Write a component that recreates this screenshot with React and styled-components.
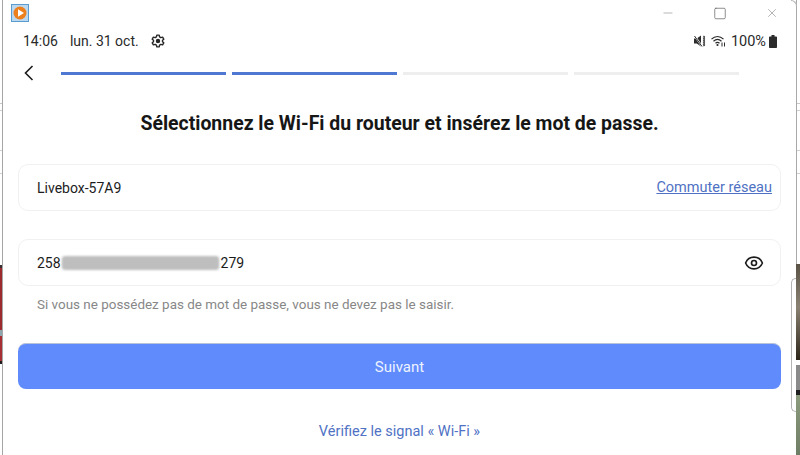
import styled, { createGlobalStyle } from "styled-components"
import { Eye, Minus, Square, X } from "lucide-react"

const GlobalStyle = createGlobalStyle`
  html, body {
    margin: 0;
    padding: 0;
    height: 100%;
    background: #fff;
    overflow: hidden;
  }
  body {
    font-family: Roboto, "Liberation Sans", sans-serif;
  }
`;

const Desktop = styled.div`
  display: flex;
  width: 800px;
  height: 455px;
  overflow: hidden;
`;

const Strip = styled.div`
  display: flex;
  flex-direction: column;
  flex: none;
  width: ${(p) => p.$width}px;
`;

const StripPart = styled.div`
  flex: none;
  height: ${(p) => p.$height}px;
  background: ${(p) => p.$color};
  border-left: ${(p) => (p.$edge ? "1px solid #a9a9a9" : "none")};
`;

const Window = styled.main`
  position: relative;
  flex: 1;
  min-width: 0;
  display: flex;
  flex-direction: column;
  border-left: 1px solid #a6a6a6;
  background: #fff;
`;

const Corner = styled.div`
  position: absolute;
  top: 0;
  right: -1px;
  width: 5px;
  height: 5px;
  border-top: 1px solid #b5b5b5;
  border-right: 1px solid #b5b5b5;
  border-top-right-radius: 6px;
`;

const SidePanel = styled.div`
  position: absolute;
  top: 278px;
  right: 0;
  width: 4px;
  height: 132px;
  border: 1px solid #b4b4b4;
  border-right: none;
  border-radius: 5px 0 0 5px;
  background: #fff;
`;

const TitleBar = styled.header`
  display: flex;
  align-items: center;
  justify-content: space-between;
  height: 26px;
  padding: 0 17px 0 8px;
`;

const WindowControls = styled.div`
  display: flex;
  align-items: center;
  gap: 38px;
`;

const ControlButton = styled.span`
  display: flex;
  align-items: center;
  justify-content: center;
  width: 14px;
  color: ${(p) => p.$color || "#5f5f5f"};
`;

const StatusBar = styled.div`
  display: flex;
  align-items: center;
  justify-content: space-between;
  height: 30px;
  padding: 0 19px 0 20px;
  font-size: 14px;
  color: #2a2a2a;
`;

const StatusGroup = styled.div`
  display: flex;
  align-items: center;
`;

const StatusDate = styled.span`
  margin: 0 12px 0 12px;
`;

const IconGap = styled.span`
  width: 5px;
`;

const Percent = styled.span`
  margin: 0 3px 0 5px;
  font-size: 14.5px;
`;

const NavRow = styled.nav`
  display: flex;
  align-items: center;
  height: 34px;
  padding-left: 21px;
`;

const BackButton = styled.span`
  display: flex;
  width: 37px;
  flex: none;
`;

const Steps = styled.div`
  display: flex;
  gap: 6px;
`;

const Step = styled.div`
  width: 165px;
  height: 3px;
  background: ${(p) => (p.$done ? "#4f78d2" : "#eeeeee")};
`;

const Content = styled.section`
  display: flex;
  flex-direction: column;
  padding: 0 15px;
`;

const Title = styled.h1`
  margin: 22px 0 28px;
  font-size: 19.45px;
  line-height: 24px;
  font-weight: 700;
  text-align: center;
  color: #161616;
`;

const Field = styled.div`
  display: flex;
  align-items: center;
  justify-content: space-between;
  height: 47px;
  box-sizing: border-box;
  padding: 0 8px 0 18px;
  margin-bottom: ${(p) => p.$gap || 0}px;
  border: 1px solid #f1f1f1;
  border-radius: 10px;
  font-size: 14px;
  color: #1c1c1c;
`;

const SwitchLink = styled.a`
  font-size: 14.5px;
  color: #4f72c4;
  text-decoration: underline;
`;

const Secret = styled.span`
  display: flex;
  align-items: center;
`;

const Smudge = styled.span`
  display: block;
  width: 157px;
  height: 14px;
  margin: 0 2px 0 1px;
  border-radius: 3px;
  background: repeating-linear-gradient(90deg, #a4a4a4 0 1px, #d8d8d8 1px 2px);
  filter: blur(0.8px);
`;

const Hint = styled.p`
  margin: 11px 0 30px 19px;
  font-size: 13.45px;
  line-height: 16px;
  color: #878787;
`;

const NextButton = styled.button`
  height: 46px;
  border: none;
  border-top: 1px solid #b9c3d8;
  border-radius: 8px;
  background: #5f8bfd;
  font-family: inherit;
  font-size: 15px;
  color: #eef3ff;
`;

const SignalLink = styled.a`
  margin-top: 33px;
  font-size: 14.5px;
  line-height: 20px;
  text-align: center;
  color: #4f72c4;
`;

const leftParts = [
  { height: 103, color: "#fff" },
  { height: 1, color: "#c8c8c8" },
  { height: 6, color: "#fff" },
  { height: 1, color: "#d0d0d0" },
  { height: 39, color: "#fff" },
  { height: 1, color: "#d0d0d0" },
  { height: 22, color: "#fff" },
  { height: 1, color: "#d0d0d0" },
  { height: 91, color: "#fff" },
  { height: 3, color: "#3a3030" },
  { height: 62, color: "#9c2b2e" },
  { height: 6, color: "#8fa6b0" },
  { height: 25, color: "#a52f32" },
  { height: 3, color: "#1d1d1d" },
  { height: 91, color: "#fff" },
]

const rightParts = [
  { height: 103, color: "#fff", edge: true },
  { height: 1, color: "#c8c8c8", edge: true },
  { height: 6, color: "#fff", edge: true },
  { height: 1, color: "#d0d0d0", edge: true },
  { height: 39, color: "#fff", edge: true },
  { height: 1, color: "#d0d0d0", edge: true },
  { height: 22, color: "#fff", edge: true },
  { height: 1, color: "#d0d0d0", edge: true },
  { height: 90, color: "#fff", edge: true },
  { height: 96, color: "linear-gradient(#5a5346, #8a8172 45%, #2e2619)" },
  { height: 5, color: "#fff" },
  { height: 25, color: "#8a8a8a" },
  { height: 5, color: "#1f1f1f" },
  { height: 60, color: "linear-gradient(#8b9b7c, #6f7d66)" },
]

const AppIcon = () => (
  <svg width="18" height="18" viewBox="0 0 18 18">
    <rect x="0.5" y="0.5" width="17" height="17" fill="#bcd8ef" stroke="#5a9bd0" />
    <circle cx="9" cy="9" r="6.5" fill="#ee7f1d" />
    <path d="M7 5.2 L13 9 L7 12.8 Z" fill="#fff" />
  </svg>
)

const GearIcon = () => (
  <svg width="14" height="14" viewBox="0 0 24 24" fill="none" stroke="#262626" strokeWidth="2.4" strokeLinejoin="round">
    <path d="M10 2h4l.7 3 2.3 1.3 2.9-.9 2 3.4-2.2 2.1v2.2l2.2 2.1-2 3.4-2.9-.9L14.700 19 14 22h-4l-.7-3L7 17.700l-2.900.9-2-3.400 2.200-2.100v-2.200L2.100 8.800l2-3.400 2.900.9L9.300 5z" />
    <circle cx="12" cy="12" r="2.600" fill="#262626" />
  </svg>
)

const MuteIcon = () => (
  <svg width="12" height="12" viewBox="0 0 12 12" fill="none">
    <path d="M0 3.500h2.800L7 .5v11L2.800 8.500H0z" fill="#2b2b2b" />
    <path d="M.5 .5l7.500 11" stroke="#fff" strokeWidth="1.800" />
    <path d="M.5 1l7.500 10.500" stroke="#2b2b2b" strokeWidth="1" />
    <path d="M9.500 1l1 1-1 1 1 1-1 1 1 1-1 1 1 1-1 1 1 1-1 1" stroke="#2b2b2b" strokeWidth="1.100" />
  </svg>
)

const WifiIcon = () => (
  <svg width="15" height="12" viewBox="0 0 15 12" fill="none" stroke="#2b2b2b">
    <path d="M.5 4.200C4 .6 9 .6 12.500 4.200" strokeWidth="1.200" />
    <path d="M2.500 6.200C5 3.800 8 3.800 10.500 6.200" strokeWidth="1.200" />
    <path d="M4.500 8.200C5.800 7 7.200 7 8.500 8.200" strokeWidth="1.200" />
    <circle cx="6.500" cy="10" r="1.100" fill="#2b2b2b" stroke="none" />
    <path d="M11 7.500v4M13.500 7.500v4" strokeWidth="1" />
  </svg>
)

const BatteryIcon = () => (
  <svg width="8" height="13" viewBox="0 0 8 13">
    <path d="M2.500 0h3v1.500H7.200a.8.8 0 0 1 .8.8V12.200a.8.8 0 0 1-.8.8H.8a.8.8 0 0 1-.8-.8V2.300a.8.8 0 0 1 .8-.8H2.500z" fill="#2b2b2b" />
  </svg>
)

const BackIcon = () => (
  <svg width="10" height="16" viewBox="0 0 10 16" fill="none" stroke="#1c1c1c" strokeWidth="1.600">
    <path d="M8.500 1L1.500 8l7 7" />
  </svg>
)

const App = () => {
  return (
    <Desktop>
      <GlobalStyle />
      <Strip $width={2}>
        {leftParts.map((part, i) => (
          <StripPart key={i} $height={part.height} $color={part.color} />
        ))}
      </Strip>
      <Window>
        <Corner />
        <SidePanel />
        <TitleBar>
          <AppIcon />
          <WindowControls>
            <ControlButton $color="#9a9a9a">
              <Minus size={14} strokeWidth={1.2} />
            </ControlButton>
            <ControlButton>
              <Square size={15} strokeWidth={1.2} />
            </ControlButton>
            <ControlButton>
              <X size={24} strokeWidth={0.8} />
            </ControlButton>
          </WindowControls>
        </TitleBar>
        <StatusBar>
          <StatusGroup>
            <span>14:06</span>
            <StatusDate>lun. 31 oct.</StatusDate>
            <GearIcon />
          </StatusGroup>
          <StatusGroup>
            <MuteIcon />
            <IconGap />
            <WifiIcon />
            <Percent>100%</Percent>
            <BatteryIcon />
          </StatusGroup>
        </StatusBar>
        <NavRow>
          <BackButton>
            <BackIcon />
          </BackButton>
          <Steps>
            <Step $done />
            <Step $done />
            <Step />
            <Step />
          </Steps>
        </NavRow>
        <Content>
          <Title>Sélectionnez le Wi-Fi du routeur et insérez le mot de passe.</Title>
          <Field $gap={28}>
            <span>Livebox-57A9</span>
            <SwitchLink>Commuter réseau</SwitchLink>
          </Field>
          <Field>
            <Secret>
              258
              <Smudge />
              279
            </Secret>
            <Eye size={20} strokeWidth={2} color="#1c1c1c" style={{ marginRight: 8 }} />
          </Field>
          <Hint>Si vous ne possédez pas de mot de passe, vous ne devez pas le saisir.</Hint>
          <NextButton>Suivant</NextButton>
          <SignalLink>Vérifiez le signal « Wi-Fi »</SignalLink>
        </Content>
      </Window>
      <Strip $width={4}>
        {rightParts.map((part, i) => (
          <StripPart key={i} $height={part.height} $color={part.color} $edge={part.edge} />
        ))}
      </Strip>
    </Desktop>
  )
}

export default App
